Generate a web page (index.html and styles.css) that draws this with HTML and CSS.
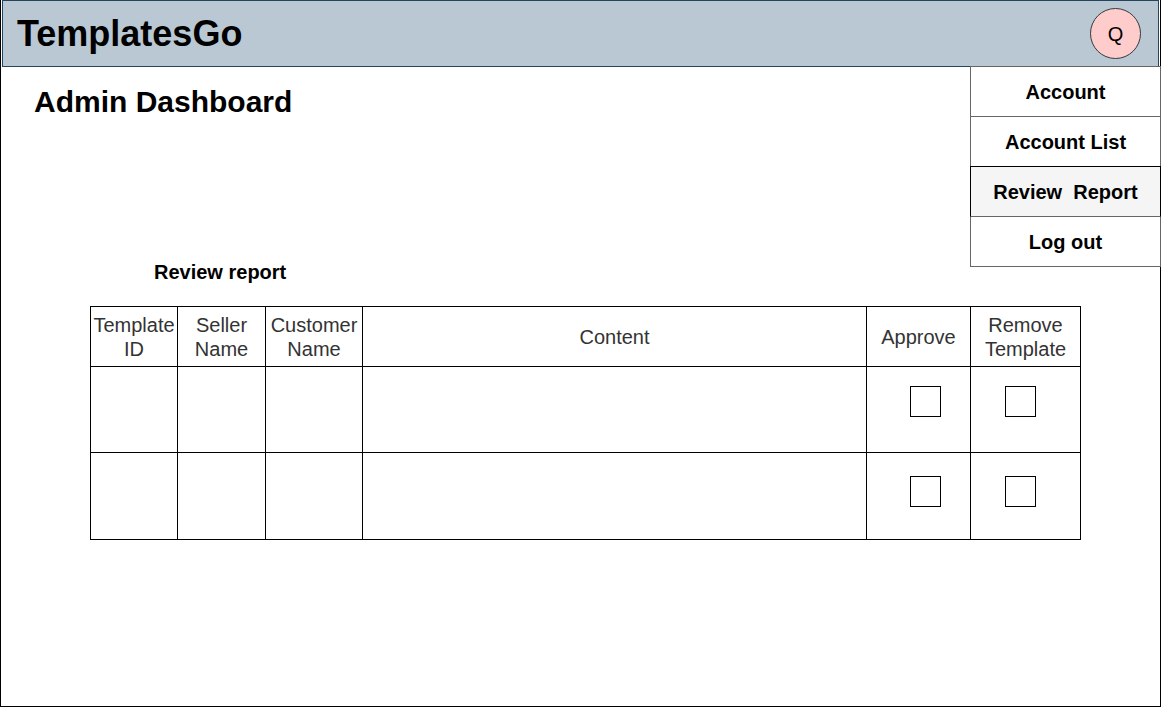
FILE: index.html
```html
<!DOCTYPE html>
<html lang="en">
<head>
<meta charset="utf-8">
<meta name="viewport" content="width=device-width, initial-scale=1">
<title>TemplatesGo - Admin Dashboard</title>
<link rel="stylesheet" href="styles.css">
</head>
<body>
<div class="page">
  <header class="topbar">
    <a class="brand" href="#">TemplatesGo</a>
    <button class="avatar" type="button" aria-label="Q, user menu">Q</button>
    <nav class="menu" aria-label="User menu">
      <a class="menu-item" href="#">Account</a>
      <a class="menu-item" href="#">Account List</a>
      <a class="menu-item menu-item-active" href="#" aria-current="page">Review&nbsp; Report</a>
      <a class="menu-item" href="#">Log out</a>
    </nav>
  </header>
  <main class="content">
    <h1 class="title">Admin Dashboard</h1>
    <section class="report">
      <h2 class="report-title" id="report-title">Review report</h2>
      <table class="table" aria-labelledby="report-title">
        <colgroup>
          <col class="col-template">
          <col class="col-seller">
          <col class="col-customer">
          <col>
          <col class="col-approve">
          <col class="col-remove">
        </colgroup>
        <thead>
          <tr>
            <th scope="col">Template ID</th>
            <th scope="col">Seller Name</th>
            <th scope="col">Customer Name</th>
            <th scope="col">Content</th>
            <th scope="col">Approve</th>
            <th scope="col">Remove Template</th>
          </tr>
        </thead>
        <tbody>
          <tr class="row-first">
            <td></td><td></td><td></td><td></td>
            <td class="cell-approve"><input class="check" type="checkbox" aria-label="Approve report 1"></td>
            <td class="cell-remove"><input class="check" type="checkbox" aria-label="Remove template of report 1"></td>
          </tr>
          <tr class="row-second">
            <td></td><td></td><td></td><td></td>
            <td class="cell-approve"><input class="check" type="checkbox" aria-label="Approve report 2"></td>
            <td class="cell-remove"><input class="check" type="checkbox" aria-label="Remove template of report 2"></td>
          </tr>
        </tbody>
      </table>
    </section>
  </main>
</div>
</body>
</html>
```
FILE: styles.css
```css
* {
  box-sizing: border-box;
}

body {
  margin: 0;
  background: #fff;
  color: #000;
  font-family: "Liberation Sans", Arial, Helvetica, sans-serif;
  font-size: 20px;
  line-height: 24px;
}

.page {
  min-height: 100vh;
  border: 1px solid #000;
  border-top: 0;
}

.topbar {
  position: relative;
  display: flex;
  align-items: center;
  justify-content: space-between;
  height: 67px;
  margin: 0 1px;
  padding: 0 17px 0 14px;
  border: 1px solid #23445d;
  background: #bac8d3;
}

.brand {
  color: #000;
  font-size: 36px;
  font-weight: bold;
  line-height: 44px;
  text-decoration: none;
}

.avatar {
  width: 51px;
  height: 51px;
  padding: 0;
  border: 1px solid #36393d;
  border-radius: 50%;
  background: #ffcccc;
  color: #000;
  font: inherit;
}

.menu {
  position: absolute;
  top: 100%;
  right: -3px;
  width: 191px;
  border: 1px solid #666;
}

.menu-item {
  display: flex;
  align-items: center;
  justify-content: center;
  height: 50px;
  border-bottom: 1px solid #666;
  background: #fff;
  color: #000;
  font-weight: bold;
  text-decoration: none;
}

.menu-item:last-child {
  height: 49px;
  border-bottom: 0;
}

.menu-item-active {
  margin: 0 -1px;
  border-right: 1px solid #000;
  border-left: 1px solid #000;
  background: #f5f5f5;
  box-shadow: 0 -1px 0 #000;
}

.content {
  padding: 17px 79px 40px 33px;
}

.title {
  margin: 0;
  font-size: 30px;
  line-height: 36px;
}

.report {
  margin: 140px 0 0 56px;
}

.report-title {
  margin: 0 0 22px 64px;
  font-size: 20px;
}

.table {
  width: 100%;
  table-layout: fixed;
  border-collapse: collapse;
}

.col-template {
  width: 87px;
}

.col-seller {
  width: 88px;
}

.col-customer {
  width: 97px;
}

.col-approve {
  width: 104px;
}

.col-remove {
  width: 110px;
}

.table th,
.table td {
  padding: 0;
  border: 1px solid #000;
}

.table th {
  height: 60px;
  color: #333;
  font-weight: normal;
}

.table td {
  vertical-align: top;
}

.row-first {
  height: 86px;
}

.row-second {
  height: 87px;
}

.table .cell-approve {
  padding-left: 43px;
}

.table .cell-remove {
  padding-left: 34px;
}

.row-first .check {
  margin-top: 19px;
}

.row-second .check {
  margin-top: 23px;
}

.check {
  display: block;
  width: 31px;
  height: 31px;
  margin: 0;
  border: 1px solid #000;
  background: #fff;
  appearance: none;
}

.check:checked {
  box-shadow: inset 0 0 0 6px #fff;
  background: #23445d;
}
```
